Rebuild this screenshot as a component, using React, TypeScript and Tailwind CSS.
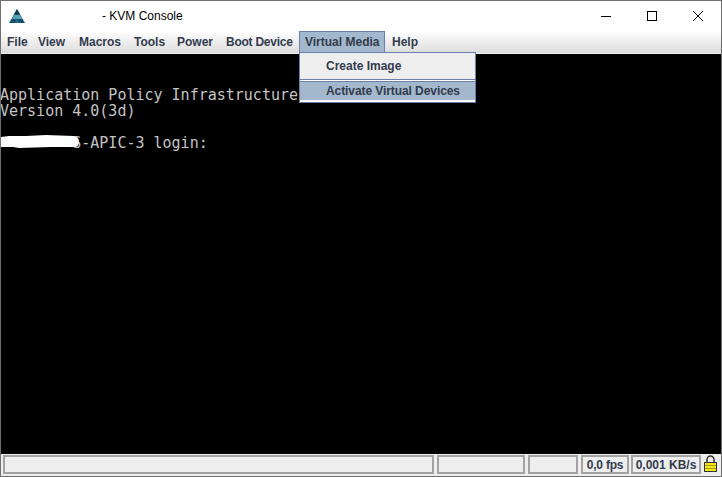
const menus = [
  { label: "File", className: "w-[31px]" },
  { label: "View", className: "w-[41px]" },
  { label: "Macros", className: "w-[55px]" },
  { label: "Tools", className: "w-[43px]" },
  { label: "Power", className: "w-[49px]" },
  { label: "Boot Device", className: "w-[79px] tracking-[-0.25px]" },
]

const Logo = () => (
  <svg width="16" height="15" viewBox="0 0 16 15" className="ml-[8px]">
    <path d="M8 0 L16 14 L0 14 Z" fill="#1f6f8f" />
    <path d="M8 0 L11 5.5 L5 5.5 Z" fill="#14384f" />
    <path d="M5 6 L11 6 L13 10 L3 10 Z" fill="#5aa0b8" />
    <path d="M3 10 L8 10 L6 14 L0.5 14 Z" fill="#16506c" />
    <path d="M8 10 L13 10 L15.5 14 L10 14 Z" fill="#16506c" />
  </svg>
)

const StatusField = ({ className, children }: { className: string; children?: React.ReactNode }) => (
  <div className={`h-[19px] border-2 border-[#a3a3a3] bg-[#eeeeee] flex items-center justify-center text-[12px] font-bold text-[#333b4d] ${className}`}>
    {children}
  </div>
)

export default function App() {
  return (
    <div className="w-[722px] h-[477px] flex flex-col overflow-hidden bg-[#eeeeee] border border-[#707070] font-['Liberation_Sans',Arial,sans-serif] relative">
      {/* Title bar */}
      <div className="h-[30px] bg-white flex items-center shrink-0">
        <Logo />
        <span className="ml-[77px] text-[12px] text-black">- KVM Console</span>
        <div className="ml-auto flex items-center">
          <div className="w-[46px] h-[30px] flex items-center justify-center">
            <div className="w-[10px] h-px bg-black" />
          </div>
          <div className="w-[46px] h-[30px] flex items-center justify-center">
            <div className="w-[10px] h-[10px] border border-black" />
          </div>
          <div className="w-[46px] h-[30px] flex items-center justify-center">
            <svg width="10" height="10" viewBox="0 0 10 10">
              <path d="M0 0 L10 10 M10 0 L0 10" stroke="black" strokeWidth="1" />
            </svg>
          </div>
        </div>
      </div>

      {/* Menu bar */}
      <div className="h-[23px] flex items-start shrink-0 bg-gradient-to-b from-white to-[#dcdcdc] border-b border-[#eeeeee] text-[12px] leading-[22px] font-bold text-[#333b4d]">
        {menus.map((m) => (
          <span key={m.label} className={`pl-[6px] ${m.className}`}>{m.label}</span>
        ))}
        <span className="w-[86px] pl-[5px] h-[22px] leading-[20px] bg-[#a3b8cc] border border-[#6b7fa8]">Virtual Media</span>
        <span className="pl-[7px]">Help</span>
      </div>

      {/* Console */}
      <div className="flex-1 bg-black relative">
        <pre className="-ml-px pt-[33px] font-['DejaVu_Sans_Mono',monospace] text-[15px] leading-[16px] text-[#c4c4c4]">
{`Application Policy Infrastructure
Version 4.0(3d)

        S-APIC-3 login:`}
        </pre>
        <svg width="80" height="14" viewBox="0 0 80 14" className="absolute left-0 top-[81px]">
          <path d="M0 2 L8 1 L25 1 L45 0 L73 1 Q78 2 78 7 Q78 12 73 12 L50 12 L18 13 L12 12 L0 12 Z" fill="white" />
        </svg>
      </div>

      {/* Status bar */}
      <div className="h-[22px] flex items-start pt-px shrink-0 pl-[2px] gap-[3px] bg-[#eeeeee]">
        <StatusField className="w-[431px]" />
        <StatusField className="w-[88px]" />
        <StatusField className="w-[50px]" />
        <StatusField className="w-[48px] tracking-[-0.2px]">0,0 fps</StatusField>
        <StatusField className="w-[70px] -ml-px">0,001 KB/s</StatusField>
        <svg width="15" height="18" viewBox="0 0 15 18" className="-ml-px">
          <path d="M4 8 V4.5 a3.5 3.5 0 0 1 7 0 V8" fill="none" stroke="#333" strokeWidth="1.5" />
          <rect x="1.5" y="7.5" width="12" height="9" fill="#f2e61c" stroke="#333" />
          <path d="M2 10.5 H13 M2 13.5 H13" stroke="#a8a010" />
        </svg>
      </div>

      {/* Open menu */}
      <div className="absolute left-[298px] top-[51px] w-[177px] h-[51px] flex flex-col bg-[#eeeeee] border border-[#6b7fa8] text-[12px] font-bold text-[#333b4d]">
        <div className="h-[25px] flex items-center pl-[26px]">Create Image</div>
        <div className="border-t border-[#6b7fa8] h-[2px] bg-white mt-px" />
        <div className="h-[19px] flex items-center pl-[26px] tracking-[-0.08px] bg-[#a3b8cc] border-t border-[#6b7fa8]">Activate Virtual Devices</div>
        <div className="flex-1 bg-white" />
      </div>
    </div>
  )
}
